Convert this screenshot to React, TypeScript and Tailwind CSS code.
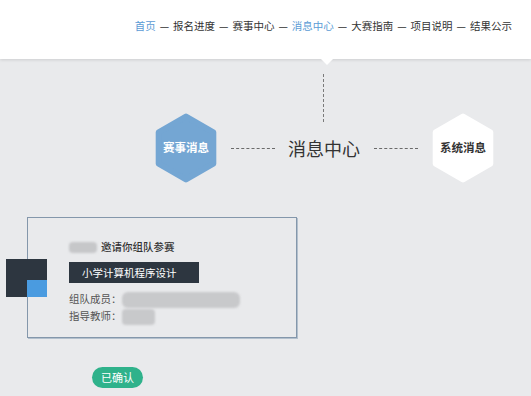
import React from "react";

const font = { fontFamily: '"Noto Sans CJK SC", "Noto Sans", sans-serif' };

function Hex({ fill, text, textColor }: { fill: string; text: string; textColor: string }) {
  return (
    <div className="relative w-[62px] h-[70px] flex items-center justify-center shrink-0">
      <svg className="absolute inset-0" width="62" height="70" viewBox="0 0 62 70">
        <polygon
          points="31,3.5 58.3,19.25 58.3,50.75 31,66.5 3.7,50.75 3.7,19.25"
          fill={fill}
          stroke={fill}
          strokeWidth="6"
          strokeLinejoin="round"
        />
      </svg>
      <span className={`relative text-[11.5px] font-bold leading-none ${textColor}`}>{text}</span>
    </div>
  );
}

export default function App() {
  const nav = ["首页", "报名进度", "赛事中心", "消息中心", "大赛指南", "项目说明", "结果公示"];
  const blue = new Set(["首页", "消息中心"]);
  return (
    <div className="w-[531px] h-[396px] overflow-hidden bg-[#e9eaec]" style={font}>
      <header className="relative z-10 h-[59px] bg-white shadow-[0_1px_3px_rgba(0,0,0,0.12)] flex justify-end items-start pt-[17px] pr-[19px]">
        <nav className="flex text-[10.5px] leading-[17px] text-[#333] whitespace-nowrap">
          {nav.map((n, i) => (
            <React.Fragment key={n}>
              {i > 0 && <span className="px-[4px]">—</span>}
              <span className={blue.has(n) ? "text-[#5b9bd5]" : ""}>{n}</span>
            </React.Fragment>
          ))}
        </nav>
        <div className="absolute left-[321px] top-[59px] w-0 h-0 border-l-[6px] border-r-[6px] border-t-[6px] border-l-transparent border-r-transparent border-t-white" />
      </header>
      <main>
        <div className="ml-[323px] mt-[15px] h-[48px] border-l border-dashed border-[#7a7a7a]" />
        <div className="mt-[-9px] flex items-center pl-[155px] h-[70px]">
          <Hex fill="#74a6d3" text="赛事消息" textColor="text-white" />
          <div className="ml-[14px] w-[44px] border-t border-dashed border-[#6a6a6a]" />
          <div className="ml-[13px] text-[18px] leading-[24px] text-[#333] whitespace-nowrap">消息中心</div>
          <div className="ml-[14px] w-[44px] border-t border-dashed border-[#6a6a6a]" />
          <div className="ml-[14px]">
            <Hex fill="#ffffff" text="系统消息" textColor="text-[#333]" />
          </div>
        </div>
        <div className="relative mt-[34px] ml-[27px] w-[270px] h-[121px] border border-[#8497ab] shadow-[1px_1px_0_#b3c0cd] pl-[41px] pt-[21px]">
          <div className="absolute left-[-22px] top-[41px] w-[41px] h-[38px] bg-[#2d3640]">
            <div className="absolute left-[21px] top-[21px] w-[20px] h-[17px] bg-[#4a9be0]" />
          </div>
          <div className="flex items-center h-[16px]">
            <div className="w-[28px] h-[11px] bg-[#c6c7c9] rounded-sm blur-[1px]" />
            <span className="ml-[4px] text-[10.5px] font-medium text-[#333] leading-none">邀请你组队参赛</span>
          </div>
          <div className="mt-[7px] w-[130px] h-[21px] bg-[#2d3640] text-white text-[10.5px] leading-[21px] pl-[13px]">
            小学计算机程序设计
          </div>
          <div className="mt-[8px] flex items-center h-[17px]">
            <span className="text-[10.5px] text-[#555] leading-none w-[53px]">组队成员：</span>
            <div className="w-[118px] h-[16px] bg-[#c8c9cb] rounded-md blur-[1px]" />
          </div>
          <div className="flex items-center h-[17px]">
            <span className="text-[10.5px] text-[#555] leading-none w-[53px]">指导教师：</span>
            <div className="w-[33px] h-[16px] bg-[#c8c9cb] rounded-sm blur-[1px]" />
          </div>
        </div>
        <div className="mt-[29px] ml-[92px] w-[51px] h-[21px] rounded-full bg-[#2fb28b] text-white text-[11px] leading-[21px] text-center">
          已确认
        </div>
      </main>
    </div>
  );
}
